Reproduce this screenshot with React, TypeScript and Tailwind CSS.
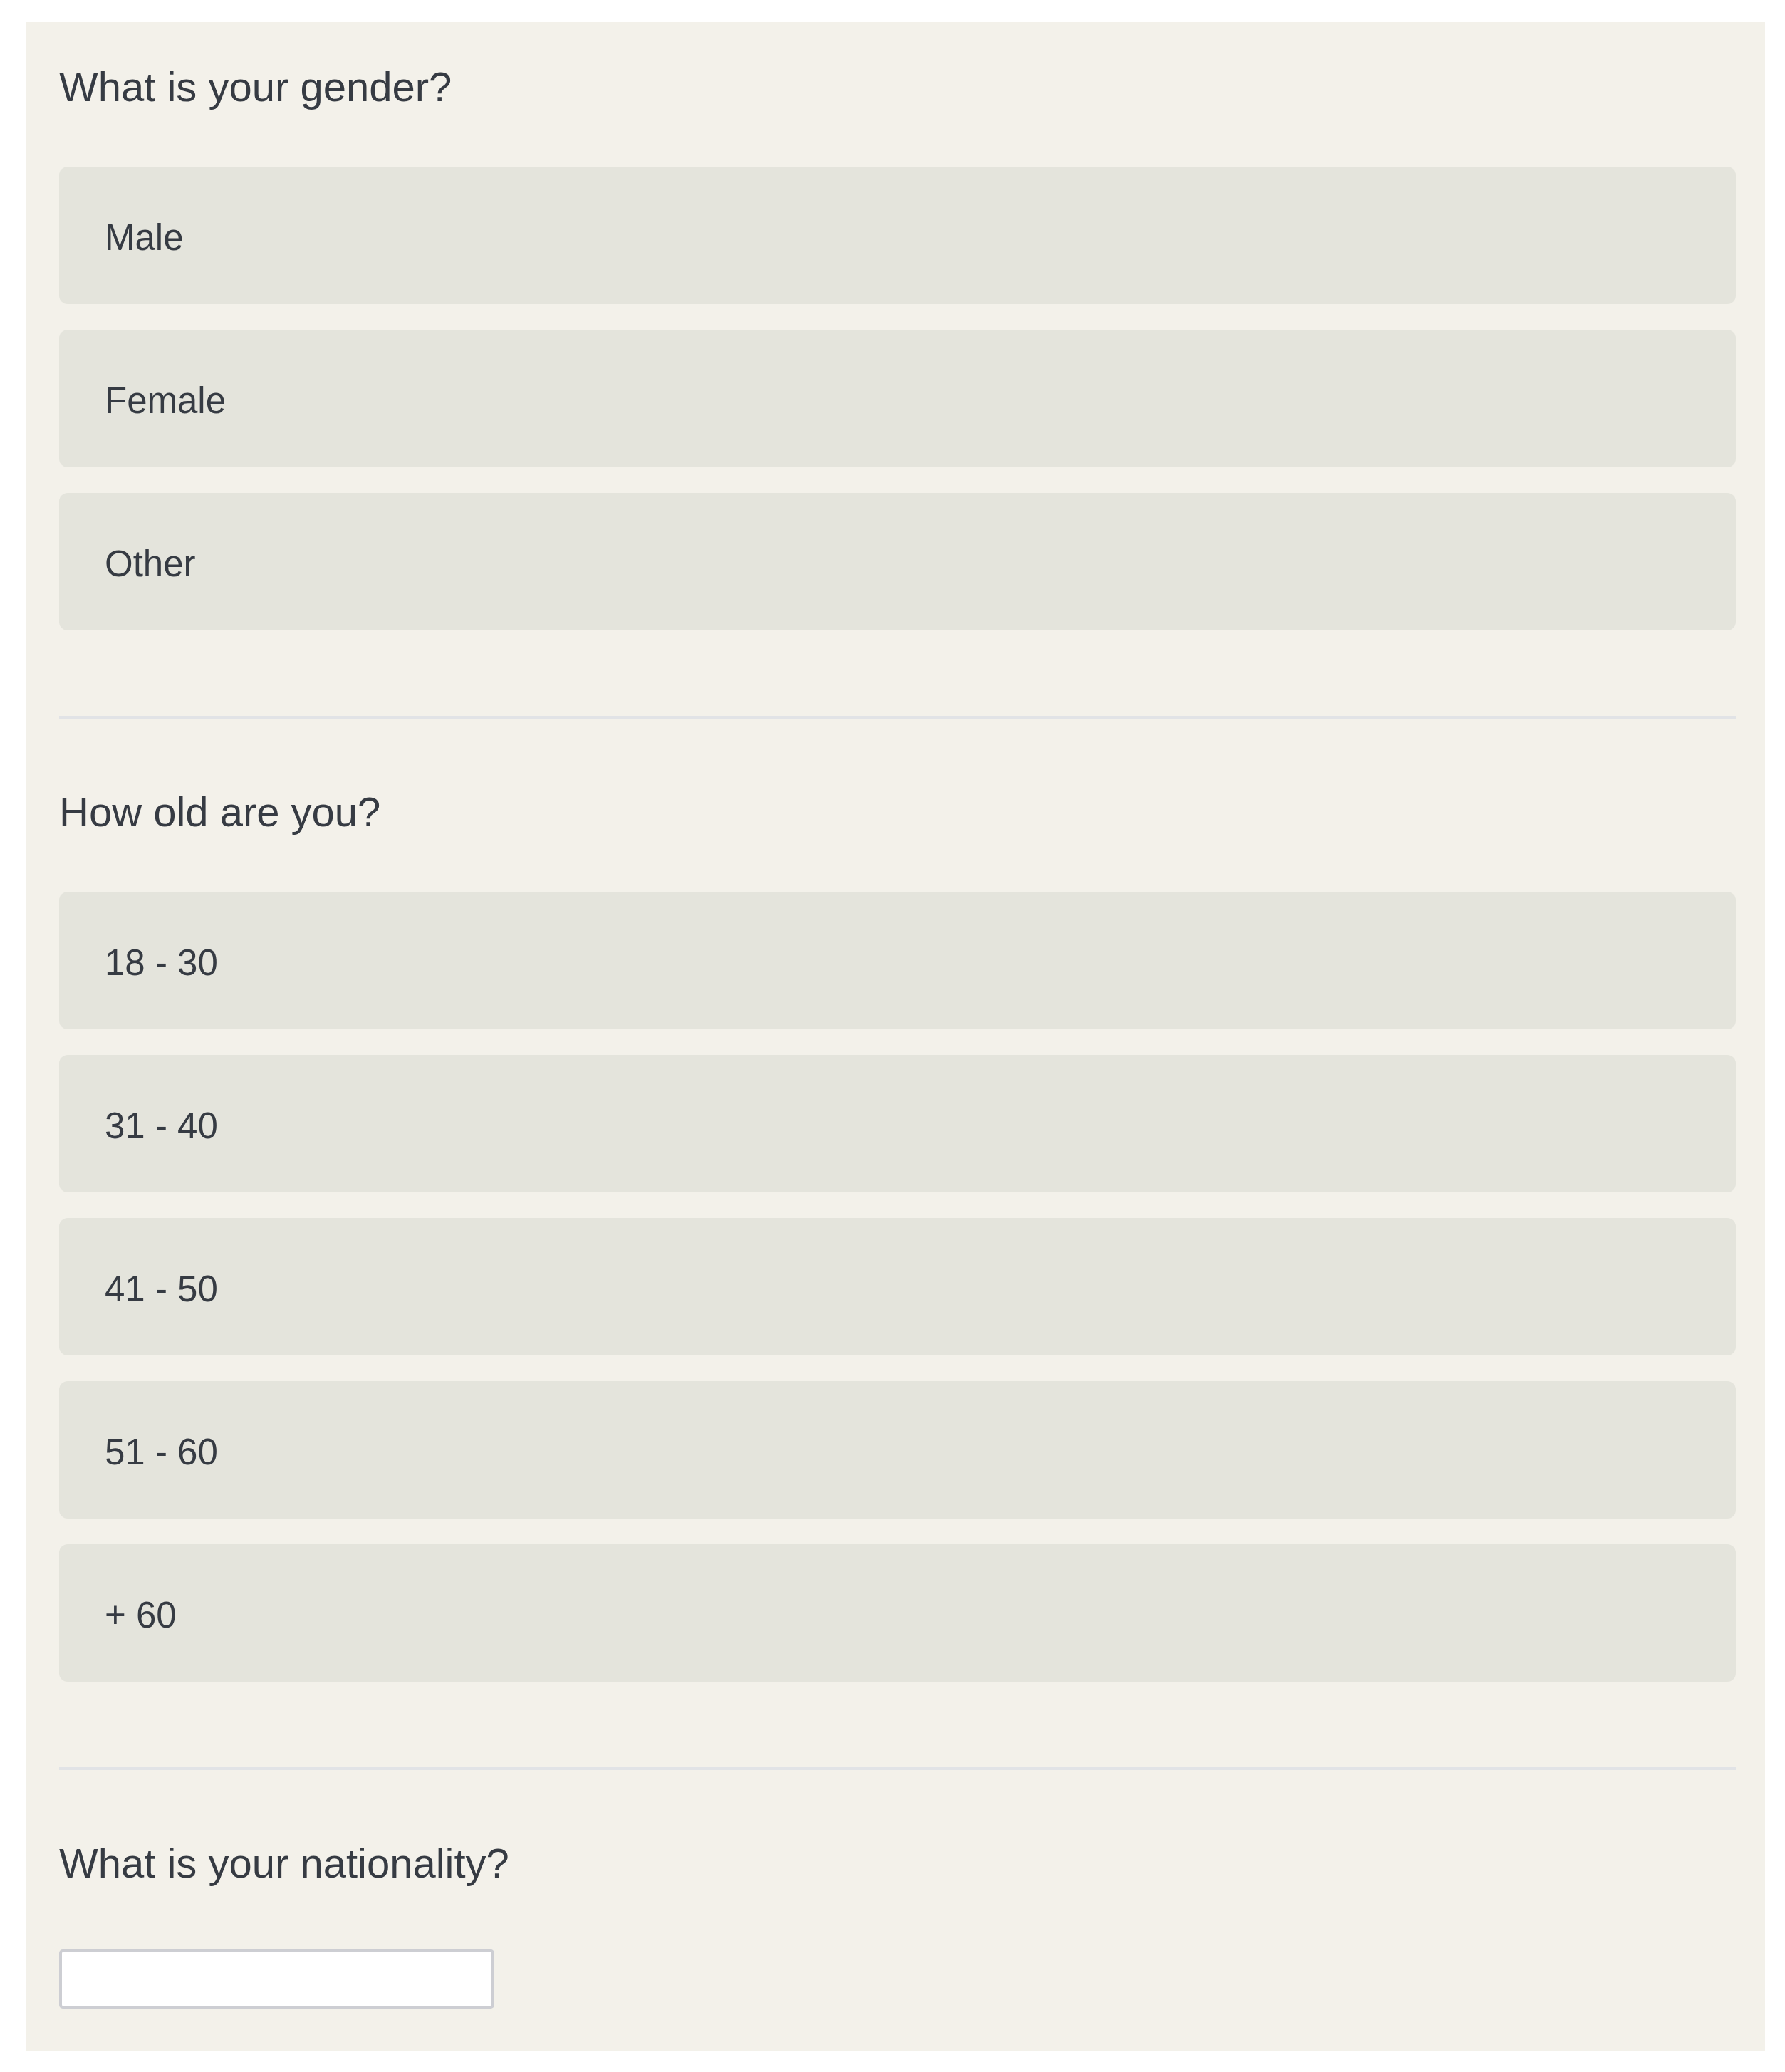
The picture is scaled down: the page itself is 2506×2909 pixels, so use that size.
const genders = ["Male", "Female", "Other"];
const ages = ["18 - 30", "31 - 40", "41 - 50", "51 - 60", "+ 60"];

function Question({ title }: { title: string }) {
  return (
    <h2 className="text-[58px] leading-[64px] text-[#363b43] font-normal">
      {title}
    </h2>
  );
}

function Options({ items }: { items: string[] }) {
  return (
    <div className="mt-[80px] flex flex-col gap-[36px]">
      {items.map((item) => (
        <button
          key={item}
          type="button"
          className="h-[193px] w-full rounded-[12px] bg-[#e4e4dc] pl-[64px] pt-[8px] flex items-center text-left text-[51px] text-[#363b43]"
        >
          {item}
        </button>
      ))}
    </div>
  );
}

function Divider() {
  return <div className="h-[4px] bg-[#e1e3e6] mt-[120px] mb-[99px]" />;
}

export default function App() {
  return (
    <div
      className="min-h-[2909px] bg-white pt-[31px] pl-[37px]"
      style={{ fontFamily: '"Liberation Sans", Arial, sans-serif' }}
    >
      <div className="w-[2441px] bg-[#f3f1ea] pl-[46px] pr-[41px] pt-[59px] pb-[60px]">
        <Question title="What is your gender?" />
        <Options items={genders} />
        <Divider />
        <Question title="How old are you?" />
        <Options items={ages} />
        <Divider />
        <Question title="What is your nationality?" />
        <input
          type="text"
          className="mt-[89px] block h-[83px] w-[611px] rounded-[5px] border-[4px] border-[#cdced3] bg-white outline-none"
        />
      </div>
    </div>
  );
}
